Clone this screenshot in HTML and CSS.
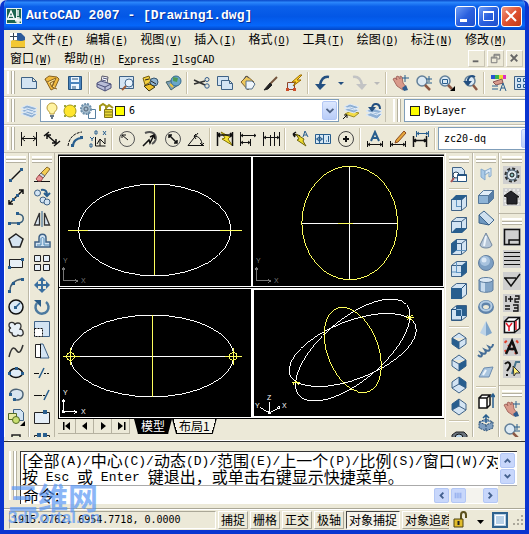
FILE: index.html
```html
<!DOCTYPE html>
<html lang="zh-CN">
<head>
<meta charset="utf-8">
<title>AutoCAD 2007 - [Drawing1.dwg]</title>
<link rel="stylesheet" href="styles.css">
</head>
<body>
<div class="window">
  <header class="titlebar">
    <svg class="app-icon" viewBox="0 0 16 16"><path fill="#e8f4ee" stroke="none" d="M0 0h16v16H0z"/><path fill="#1d6650" stroke="none" d="M1 1h9v9H1zM11 1h4v14H1v-3h10z"/><path stroke="#fff" stroke-width="1.4" d="M2 10l3-7 3 7M3 8h4M12 2v6M9 12h6M12 9v6"/><path stroke="#fff" d="M10 10h4v4h-4z"/></svg>
    <h1>AutoCAD 2007 - [Drawing1.dwg]</h1>
    <div class="win-controls">
      <button class="win-btn" aria-label="最小化"><svg viewBox="0 0 18 18"><path fill="#fff" stroke="none" d="M4 12h7v3H4z"/></svg></button>
      <button class="win-btn" aria-label="最大化"><svg viewBox="0 0 18 18"><path stroke="#fff" d="M4.500 4.500h10v9h-10z"/><path stroke="#fff" stroke-width="2" d="M4 5h11"/></svg></button>
      <button class="win-btn close" aria-label="关闭"><svg viewBox="0 0 18 18"><path stroke="#fff" stroke-width="2" d="M4 4l10 10M14 4L4 14"/></svg></button>
    </div>
  </header>

  <nav class="menubar">
    <svg class="doc-icon" viewBox="0 0 16 16"><path fill="#2b5a9b" stroke="none" d="M5 1h6l4 4v6H2z"/><path fill="#f3c832" stroke="none" d="M1 9c4-3 8 2 14-1v7H1z"/><path fill="#fff" stroke="none" d="M0 1h7v7H0z"/><path stroke="#345" d="M3.500 1v7M0 4.500h7"/><path stroke="#8b7a3a" d="M1 15.500h14"/></svg>
    <button class="menu">文件<span>(<u>F</u>)</span></button>
    <button class="menu">编辑<span>(<u>E</u>)</span></button>
    <button class="menu">视图<span>(<u>V</u>)</span></button>
    <button class="menu">插入<span>(<u>I</u>)</span></button>
    <button class="menu">格式<span>(<u>O</u>)</span></button>
    <button class="menu">工具<span>(<u>T</u>)</span></button>
    <button class="menu">绘图<span>(<u>D</u>)</span></button>
    <button class="menu">标注<span>(<u>N</u>)</span></button>
    <button class="menu">修改<span>(<u>M</u>)</span></button>
    <button class="menu">窗口<span>(<u>W</u>)</span></button>
    <button class="menu">帮助<span>(<u>H</u>)</span></button>
    <button class="menu"><span>E<u>x</u>press</span></button>
    <button class="menu"><span><u>J</u>lsgCAD</span></button>
    <div class="mdi-controls">
      <button aria-label="最小化文档"><svg viewBox="0 0 16 16"><path stroke="#666" stroke-width="2" d="M4 11h6"/></svg></button>
      <button aria-label="还原文档"><svg viewBox="0 0 16 16"><path stroke="#777" d="M6.500 7V3.500h6v5H10M3.500 6.500h6v6h-6zM6 4.500h6M4 7.500h5"/></svg></button>
      <button aria-label="关闭文档"><svg viewBox="0 0 16 16"><path stroke="#666" stroke-width="2" d="M4 4l7 7M11 4l-7 7"/></svg></button>
    </div>
  </nav>

  <div class="toolbar">
    <i class="grip"></i>
    <button class="tool" aria-label="新建"><svg viewBox="0 0 18 18"><path class="f" d="M1.500 3.500h11l4 4v7h-15zM12.500 3.500v4h4"/></svg></button>
    <button class="tool" aria-label="打开"><svg viewBox="0 0 18 18"><path fill="#f0b93d" stroke="#876222" d="M2 5l4-3 8 1 2 2-4 9-4 2z"/><path fill="#ffe69a" stroke="#876222" d="M2 5l2 3 9-4-4 9 5 2M7 9l4-2-2 6z"/></svg></button>
    <button class="tool" aria-label="保存"><svg viewBox="0 0 18 18"><path fill="#4b84bd" stroke="#24527f" d="M2.500 2.500h13v13h-13z"/><path fill="#eef6ff" stroke="none" d="M5 3h8v5H5zM5 10h8v5H5z"/><path stroke="#24527f" d="M6 5h6M7 12v3M9 12v3"/></svg></button>
    <i class="sep"></i>
    <button class="tool" aria-label="打印"><svg viewBox="0 0 18 18"><path fill="#fff" stroke="#556" d="M6 8l1-6 6 1-1 6"/><path fill="#b9bdd8" stroke="#4a4f78" d="M2 9l4-2 10 3v4l-6 3-8-4z"/><path stroke="#4a4f78" d="M2 10l8 3 6-3M10 13v4M8 4l4 1M7 6l4 1"/></svg></button>
    <button class="tool" aria-label="打印预览"><svg viewBox="0 0 18 18"><path class="f" d="M1.500 2.500h14v12h-14z"/><circle cx="11" cy="9" r="4" fill="#e9f3fb" stroke="#446a90"/><path stroke="#9a5b37" stroke-width="2" d="M8 12l-4 4"/></svg></button>
    <button class="tool" aria-label="发布"><svg viewBox="0 0 18 18"><path fill="#f5d13d" stroke="#755d0c" d="M2 4l6-2 2 6-6 3z"/><circle cx="13" cy="8" r="4" fill="#8fb3cf" stroke="#35556f"/><path fill="#efc32b" stroke="#3b3410" d="M3 12l6-2 5 3-6 4z"/><path stroke="#222" d="M4 6l4-1M10 7l5 3"/></svg></button>
    <button class="tool" aria-label="三维 DWF"><svg viewBox="0 0 18 18"><path fill="#7d9fb9" stroke="#466" d="M2 8l8-2 4 5-7 5z"/><circle cx="12" cy="7" r="5" fill="#69a7c9" stroke="#376b90"/><path fill="#4f9a55" stroke="none" d="M9 3l5 1-1 4-4-1z"/><path stroke="#e9c53c" stroke-width="2" d="M6 10l3 3"/></svg></button>
    <i class="sep"></i>
    <button class="tool" aria-label="剪切"><svg viewBox="0 0 18 18"><path stroke="#333" stroke-width="1.500" d="M1 6l11 5M1 10l11-3"/><circle cx="14" cy="5.500" r="2" stroke="#335c8c"/><circle cx="14" cy="12" r="2.200" stroke="#335c8c"/></svg></button>
    <button class="tool" aria-label="复制"><svg viewBox="0 0 18 18"><path class="f" d="M1.500 2.500h11v9h-11z"/><path class="f" d="M5.500 6.500h8l3 3v6h-11zM13.500 6.500v3h3"/></svg></button>
    <button class="tool" aria-label="粘贴"><svg viewBox="0 0 18 18"><path fill="#edc75c" stroke="#806332" d="M2 8l6-6 7 6-6 8z"/><path fill="#eef5fb" stroke="#55708b" d="M7 7h6l3 3-3 5H7z"/><path stroke="#555" d="M5 5l2-3 3 2"/></svg></button>
    <button class="tool" aria-label="特性匹配"><svg viewBox="0 0 18 18"><path stroke="#74543d" stroke-width="2" d="M15 3l-7 7"/><path fill="#222" stroke="#222" d="M8 9l2 2-4 4-4 1z"/></svg></button>
    <button class="tool" aria-label="块编辑器"><svg viewBox="0 0 18 18"><path fill="#dde8f3" stroke="#8e4529" d="M2.500 8.500h7v7h-7z"/><path fill="#ffd52a" stroke="#9b6b00" d="M15 1L7 8h4l-3 4 8-6h-4l5-5z"/><path fill="#cb4d2a" stroke="none" d="M1 14h3v3H1zM8 14h3v3H8z"/></svg></button>
    <i class="sep"></i>
    <button class="tool" aria-label="放弃"><svg viewBox="0 0 18 18"><path stroke="#234f80" stroke-width="2.500" d="M15 3C9 2 7 6 6 11"/><path fill="#234f80" stroke="none" d="M1 10h11l-6 6z"/></svg></button>
    <button class="tool drop" aria-label="放弃列表"><svg viewBox="0 0 8 8"><path fill="#234f80" stroke="none" d="M1 3h6L4 6z"/></svg></button>
    <button class="tool" aria-label="重做" disabled><svg viewBox="0 0 18 18"><path stroke="#c2c3c4" stroke-width="2.500" d="M3 3c6-1 8 3 9 8"/><path fill="#c2c3c4" stroke="none" d="M6 10h11l-5 6z"/></svg></button>
    <button class="tool drop" aria-label="重做列表" disabled><svg viewBox="0 0 8 8"><path fill="#b9b9b9" stroke="none" d="M1 3h6L4 6z"/></svg></button>
    <i class="sep"></i>
    <button class="tool" aria-label="实时平移"><svg viewBox="0 0 18 18"><path fill="#d99a8b" stroke="#a66a61" d="M1 5l2-1 2 2-1-3 2-1 2 3v-3l2 1 1 6 3 4-3 3-6-4z"/><path fill="#2f5c8e" stroke="none" d="M10 14l4-3 2 5-4 1z"/><path class="b" d="M13 1v7M10 4h7"/></svg></button>
    <button class="tool" aria-label="实时缩放"><svg viewBox="0 0 18 18"><circle class="lens" cx="7" cy="7" r="5"/><path class="handle" d="M10 11l5 5"/><path class="b" d="M14 2v6M11 5h6M12 9h5"/></svg></button>
    <button class="tool" aria-label="窗口缩放"><svg viewBox="0 0 18 18"><circle class="lens" cx="7" cy="7" r="5"/><path class="b" d="M4.500 5.500h5v4h-5z"/><path class="handle" d="M10 11l4 4"/><path fill="#000" stroke="none" d="M17 12v5h-5z"/></svg></button>
    <button class="tool" aria-label="缩放上一个"><svg viewBox="0 0 18 18"><circle class="lens" cx="9" cy="7" r="5"/><path class="handle" d="M12 11l4 5"/><path stroke="#234f80" stroke-width="2" d="M14 3c-5-3-8 2-7 6"/><path fill="#234f80" stroke="none" d="M2 7h9l-4 5z"/></svg></button>
    <i class="sep"></i>
    <button class="tool" aria-label="特性"><svg viewBox="0 0 18 18"><path fill="#2854d1" stroke="none" d="M1 1h4v4H1z"/><path fill="#38b54b" stroke="none" d="M5 1h4v4H5z"/><path fill="#f1da2e" stroke="none" d="M9 1h4v4H9z"/><path fill="#db2fc2" stroke="none" d="M13 1h3v4h-3z"/><path fill="#d99a8b" stroke="#855" d="M3 8l9-3 1 4-7 2z"/><path class="b" d="M2 12h6M2 15h6M10 17l3-8 3 8M11 14h4"/></svg></button>
    <button class="tool" aria-label="设计中心"><svg viewBox="0 0 18 18"><path class="f" d="M1.500 2.500h15v13h-15z"/><path class="b" d="M4.500 4.500h3v3h-3zM10.500 4.500h3v3h-3zM4.500 10.500h3v3h-3zM10.500 10.500h3v3h-3z"/></svg></button>
  </div>

  <div class="toolbar">
    <i class="grip"></i>
    <button class="tool" aria-label="图层特性管理器"><svg viewBox="0 0 18 18"><path class="layer" d="M1 12l6-3 10 3-5 4zM1 9l6-3 10 3-5 4zM1 6l6-3 10 3-5 4z"/></svg></button>
    <div class="combo grow">
      <svg viewBox="0 0 18 18"><path fill="#fff3a1" stroke="#b79a3b" d="M7 12C7 9 4 9 4 6a5 5 0 0110 0c0 3-3 3-3 6z"/><path stroke="#678" stroke-width="2" d="M7 14h4M8 16h2"/></svg>
      <svg viewBox="0 0 18 18"><path fill="#9aa53c" stroke="none" d="M3 3h2v2H3zM13 3h2v2h-2zM3 13h2v2H3zM13 13h2v2h-2z"/><circle cx="9" cy="9" r="6" fill="#ffe62e" stroke="#a39a1c"/></svg>
      <svg viewBox="0 0 18 18"><path fill="#fff" stroke="#58809f" d="M9.500 7.500h7v9h-7z"/><circle cx="7" cy="7" r="5" fill="#a2bacc" stroke="#6f91ab" stroke-width="2" stroke-dasharray="2 1"/><circle cx="7" cy="7" r="2" stroke="#567"/></svg>
      <svg viewBox="0 0 18 18"><path stroke="#a39619" stroke-width="2" d="M3 9V4l3-2 3 2v5M9 6l3-3 4 3"/><path fill="#e8d837" stroke="#827615" d="M7.500 7.500h8v8h-8z"/><path stroke="#827615" d="M8 10h7M8 13h7"/></svg>
      <i class="swatch"></i>
      <select aria-label="图层"><option>6</option></select>
      <svg class="chevron" viewBox="0 0 15 18"><path d="M4 7l4 4 4-4"/></svg>
    </div>
    <button class="tool" aria-label="将对象的图层置为当前"><svg viewBox="0 0 18 18"><path fill="#f3dc46" stroke="#9b8d29" d="M3 12l6-3 8 2-5 4z"/><path class="layer" d="M2 8l6-3 9 3-5 3zM2 5l6-3 9 3-5 3z"/><path stroke="#111" d="M1 17l4-4M2 13h3v3"/></svg></button>
    <button class="tool" aria-label="上一个图层"><svg viewBox="0 0 18 18"><path class="layer" d="M1 13l6-3 10 2-5 5zM1 9l6-3 10 3-5 4z"/><path stroke="#234f80" stroke-width="2" d="M15 7c0-6-7-7-8-1"/><path fill="#234f80" stroke="none" d="M3 5h8l-4 5z"/></svg></button>
    <div class="subbar">
      <i class="grip"></i>
      <div class="combo wide">
        <i class="swatch"></i>
        <select aria-label="颜色"><option>ByLayer</option></select>
      </div>
    </div>
  </div>

  <div class="toolbar">
    <i class="grip"></i>
    <button class="tool" aria-label="线性标注"><svg viewBox="0 0 18 18"><path d="M1.500 2v14M16.500 2v14M2 8.500h14M5 6L2 8.500 5 11M13 6l3 2.500-3 2.500"/></svg></button>
    <button class="tool" aria-label="对齐标注"><svg viewBox="0 0 18 18"><path stroke-width="1.500" d="M1 6l5-4M11 16l6-5M4 5l9 8M4 9V5h4M13 9v4H9"/></svg></button>
    <button class="tool" aria-label="弧长标注"><svg viewBox="0 0 18 18"><path d="M2 16C3 8 8 3 16 2" stroke-dasharray="3 1"/><path class="b" stroke-width="2" d="M7 16c0-5 4-8 9-8"/><path class="n" d="M5 14h3v3H5zM14 6h3v3h-3z"/></svg></button>
    <button class="tool" aria-label="坐标标注"><svg viewBox="0 0 18 18"><path d="M6.500 7v9h10M8 14l3-5 5 5V8M11 9v7"/><path class="b" d="M6 1h2v3H6zM14 1l3 4M17 1l-3 4M1 7l2 2 2-2M3 9v2M1 14h2v3H1z"/></svg></button>
    <i class="sep"></i>
    <button class="tool" aria-label="半径标注"><svg viewBox="0 0 18 18"><circle cx="9" cy="9" r="7.500" stroke="#555"/><path d="M10 10L4 5M4 8V5h4"/></svg></button>
    <button class="tool" aria-label="折弯标注"><svg viewBox="0 0 18 18"><path stroke="#555" stroke-width="2" d="M4 3c10-4 15 6 7 11"/><path stroke-width="1.500" d="M2 16l6-6 1 3 4-8M9 7l4-2 1 4"/></svg></button>
    <button class="tool" aria-label="直径标注"><svg viewBox="0 0 18 18"><circle cx="9" cy="9" r="7.500" stroke="#555"/><path stroke-width="1.500" d="M5 5l8 8M5 8V5h3M13 10v3h-3"/></svg></button>
    <button class="tool" aria-label="角度标注"><svg viewBox="0 0 18 18"><path d="M17 15.500H1L11 3M7 6c5 0 8 4 8 9M13 13l2 2 2-2M9 4L7 6l2 3"/></svg></button>
    <i class="sep"></i>
    <button class="tool" aria-label="快速标注"><svg viewBox="0 0 18 18"><path fill="#f5e332" stroke="#857400" d="M5 2l9 5-2 2 4 6-10-6 3-1z"/><path stroke-width="1.500" d="M1.500 2v14M16.500 2v14M2 5h14M4 3L2 5l2 2M14 3l2 2-2 2"/></svg></button>
    <button class="tool" aria-label="基线标注"><svg viewBox="0 0 18 18"><path d="M1.500 2v14M2 5.500h15M2 12.500h9M11.500 9v7M4 4L2 5.500 4 7M4 11l-2 1.500L4 14M15 4l2 1.500L15 7M9 11l2 1.500L9 14"/></svg></button>
    <button class="tool" aria-label="连续标注"><svg viewBox="0 0 18 18"><path d="M1.500 2v14M8.500 5v11M12.500 2v14M17.500 2v14M2 7.500h15M4 6L2 7.500 4 9M15 6l2 1.500L15 9"/></svg></button>
    <i class="sep"></i>
    <button class="tool" aria-label="快速引线"><svg viewBox="0 0 18 18"><path stroke-width="1.500" d="M2 4l7 2M2 4l3-2M2 4l2 3"/><path fill="#f1dc2b" stroke="#6e6510" d="M5 4l8 5-1 2 3 5-9-6 2-1z"/><path class="b" d="M12 7l2-6 3 6M13 5h3"/></svg></button>
    <button class="tool" aria-label="公差"><svg viewBox="0 0 18 18"><path fill="#d7e8f5" stroke="#285e8e" d="M1.500 4.500h15v9h-15zM9.500 4v10"/><circle cx="5.500" cy="9" r="2" stroke="#285e8e"/><path class="b" d="M5.500 5v8M2 9h7M14.500 6v6M12 11h1"/></svg></button>
    <button class="tool" aria-label="圆心标记"><svg viewBox="0 0 18 18"><circle cx="9" cy="9" r="7.500" stroke="#444"/><path stroke-width="2" d="M9 6v6M6 9h6"/></svg></button>
    <i class="sep"></i>
    <button class="tool" aria-label="编辑标注"><svg viewBox="0 0 18 18"><path d="M1.500 11v6M16.500 11v6M2 14.500h14M4 13l-2 1.500L4 16M14 13l2 1.500-2 1.500"/><path class="b" stroke-width="2" d="M5 11l4-9 4 9M6 8h6"/></svg></button>
    <button class="tool" aria-label="编辑标注文字"><svg viewBox="0 0 18 18"><path d="M1.500 11v6M16.500 11v6M2 14.500h14M4 13l-2 1.500L4 16M14 13l2 1.500-2 1.500"/><path fill="#e5a63a" stroke="#8b4b20" d="M15 1l2 2-8 9-3 1 1-3z"/></svg></button>
    <button class="tool" aria-label="标注更新"><svg viewBox="0 0 18 18"><path class="b" d="M4.500 1v6M16.500 1v6M5 3.500h11M7 2L5 3.500 7 5M14 2l2 1.500L14 5"/><path stroke-width="1.500" d="M1.500 6v11M14.500 6v11M2 10.500h12M4 9l-2 1.500L4 12M12 9l2 1.500-2 1.500"/></svg></button>
    <i class="sep"></i>
    <div class="combo style-combo">
      <select aria-label="标注样式"><option>zc20-dq</option></select>
      <svg class="chevron" viewBox="0 0 15 18"><path d="M4 7l4 4 4-4"/></svg>
    </div>
  </div>

  <main class="workspace">
    <div class="rail draw-rail">
      <i class="hgrip"></i>
      <button class="tool" aria-label="直线"><svg viewBox="0 0 18 18"><path stroke-width="1.500" d="M3 15L15 3"/><path class="n" d="M2 13h3v3H2zM13 2h3v3h-3z"/></svg></button>
      <button class="tool" aria-label="构造线"><svg viewBox="0 0 18 18"><path stroke-width="1.500" d="M2 16L16 2M2 12v4h4M16 6V2h-4"/><path class="n" d="M5 10h3v3H5zM9 6h3v3H9z"/></svg></button>
      <button class="tool" aria-label="多段线"><svg viewBox="0 0 18 18"><path stroke="#365b78" stroke-width="1.500" d="M2 13h9c7 0 7-9 0-9"/><path class="n" d="M1 12h3v3H1zM10 12h3v3h-3zM9 2h3v3H9z"/></svg></button>
      <button class="tool" aria-label="正多边形"><svg viewBox="0 0 18 18"><path fill="#d6e4f0" stroke="#222" stroke-width="1.500" d="M9 2l7 5-3 8H5L2 7z"/></svg></button>
      <button class="tool" aria-label="矩形"><svg viewBox="0 0 18 18"><path fill="#e8f0f7" stroke="#222" d="M2.500 5.500h13v8h-13z"/><path class="n" d="M1 12h3v3H1zM14 4h3v3h-3z"/></svg></button>
      <button class="tool" aria-label="圆弧"><svg viewBox="0 0 18 18"><path stroke="#465d70" stroke-width="1.500" d="M3 15C3 8 8 4 15 3"/><path class="n" d="M1 14h3v3H1zM5 6h3v3H5zM14 2h3v3h-3z"/></svg></button>
      <button class="tool" aria-label="圆"><svg viewBox="0 0 18 18"><circle cx="9" cy="9" r="7" fill="#dbe9f5" stroke-width="1.500"/><path class="b" stroke-width="1.500" d="M9 9l4-4"/><path class="n" d="M7 8h3v3H7z"/></svg></button>
      <button class="tool" aria-label="修订云线"><svg viewBox="0 0 18 18"><path fill="#e8f0f7" stroke="#333" stroke-width="1.300" d="M8 5c-1-4-6-3-6 0 0 2 1 3 2 3-3 1-2 5 1 5 0 4 5 4 6 2 3 2 6 0 5-3 0-2-2-3-3-3 2-3 1-6-2-6-1 0-3 0-3 2z"/></svg></button>
      <button class="tool" aria-label="样条曲线"><svg viewBox="0 0 18 18"><path stroke="#333" stroke-width="1.500" d="M2 15C5 2 8 6 10 9s4 1 6-6"/></svg></button>
      <button class="tool" aria-label="椭圆"><svg viewBox="0 0 18 18"><ellipse cx="9" cy="9" rx="6.500" ry="4.500" fill="#e1edf7" stroke-width="1.500"/><path class="n" d="M1 8h3v3H1zM14 8h3v3h-3zM8 3h3v3H8z"/></svg></button>
      <button class="tool" aria-label="椭圆弧"><svg viewBox="0 0 18 18"><path fill="#d8e5ef" stroke="#4d6478" stroke-width="1.500" d="M3 7c3-6 13-4 13 1 0 6-6 7-10 5"/><path class="n" d="M2 7h3v3H2zM6 12h3v3H6z"/></svg></button>
      <button class="tool" aria-label="插入块"><svg viewBox="0 0 18 18"><path class="f" d="M6.500 1.500h7l3 3v8h-10z"/><path fill="#e7eaa3" stroke="#536b25" d="M1.500 5.500h8v6h-8z"/><circle cx="9" cy="12" r="3.500" fill="#cadf70" stroke="#536b25"/><path fill="#000" stroke="none" d="M18 13v5h-5z"/></svg></button>
      <button class="tool" aria-label="创建块"><svg viewBox="0 0 18 18"><path fill="#edf1d6" stroke="#222" stroke-width="1.500" d="M5 5h8v8H5z"/></svg></button>
    </div>
    <div class="rail">
      <i class="hgrip"></i>
      <button class="tool" aria-label="删除"><svg viewBox="0 0 18 18"><path d="M1 15.500h16"/><path fill="#f3cd54" stroke="#8a6a2b" d="M14 1l3 2-7 9-4-3z"/><path fill="#ced6dd" stroke="#666" d="M8 7l4 3-2 2-4-3z"/><path fill="#e99495" stroke="#a34e4e" d="M6 9l4 3-2 3H5l-2-2z"/></svg></button>
      <button class="tool" aria-label="复制对象"><svg viewBox="0 0 18 18"><circle class="f" cx="4.500" cy="5" r="3"/><circle class="f" cx="10" cy="12" r="3"/><circle class="f" cx="14" cy="14" r="3"/><path class="b" stroke-width="2" d="M8 2c5-1 6 2 6 5M11 5l3 3 3-3"/></svg></button>
      <button class="tool" aria-label="镜像"><svg viewBox="0 0 18 18"><path fill="#dce8f2" stroke="#333" stroke-width="1.300" d="M6.500 3v12h-5zM11.500 3v12h5z"/><path class="b" d="M9 1v16"/></svg></button>
      <button class="tool" aria-label="偏移"><svg viewBox="0 0 18 18"><path class="f" stroke-width="1.500" d="M2 15v-5h4V6c0-5 7-5 7 0v4h4v5z"/><path stroke="#4a86b4" d="M4 13h4V7c0-2 3-2 3 0v6h5"/></svg></button>
      <button class="tool" aria-label="阵列"><svg viewBox="0 0 18 18"><path fill="#e5eff8" stroke="#222" d="M1.500 1.500h6v6h-6zM10.500 1.500h6v6h-6zM1.500 10.500h6v6h-6zM10.500 10.500h6v6h-6z"/></svg></button>
      <button class="tool" aria-label="移动"><svg viewBox="0 0 18 18"><path fill="#3a6f9f" stroke="none" d="M9 1l4 4h-3v3h3V5l4 4-4 4v-3h-3v3h3l-4 4-4-4h3v-3H5v3L1 9l4-4v3h3V5H5z"/></svg></button>
      <button class="tool" aria-label="旋转"><svg viewBox="0 0 18 18"><path stroke="#4c7a9f" stroke-width="2.500" d="M4 5a6.500 6.500 0 109-1"/><path fill="#285b87" stroke="none" d="M1 2h7v7z"/></svg></button>
      <button class="tool" aria-label="缩放"><svg viewBox="0 0 18 18"><path class="f" d="M1.500 1.500h15v15h-15z"/><path fill="#fff" stroke-dasharray="2 1" d="M1.500 8.500h8v8h-8z"/></svg></button>
      <button class="tool" aria-label="拉伸"><svg viewBox="0 0 18 18"><path class="f" d="M7 2h3l6 14H7z"/><path fill="#fff" stroke="#222" d="M2.500 2.500h5v13h-5z"/><path stroke-dasharray="2 1" d="M7.500 2v14"/></svg></button>
      <button class="tool" aria-label="修剪"><svg viewBox="0 0 18 18"><path d="M1 9.500h5"/><path stroke-dasharray="2 1" d="M11 9.500h6"/><path class="b" stroke-width="1.500" d="M6 14L11 4"/></svg></button>
      <button class="tool" aria-label="延伸"><svg viewBox="0 0 18 18"><path d="M1 9.500h6"/><path stroke-dasharray="2 1" d="M7 9.500h5"/><path class="b" stroke-width="1.500" d="M11 14l5-10"/></svg></button>
      <button class="tool" aria-label="打断于点"><svg viewBox="0 0 18 18"><path fill="#e4eef7" stroke="#222" d="M1.500 4.500h15v11h-15z"/><path class="n" d="M10 2h4v4h-4z"/></svg></button>
      <button class="tool" aria-label="打断"><svg viewBox="0 0 18 18"><path stroke="#222" d="M6 5.500H1.500v10h15v-10H12"/><path class="n" d="M4 3h4v4H4zM10 3h4v4h-4z"/></svg></button>
    </div>

    <section class="drawing">
      <div class="viewports">
        <div class="viewport"><svg viewBox="0 0 191 129"><ellipse cx="95" cy="73" rx="76.500" ry="46"/><path d="M8 73.500h174"/><path class="y" d="M8 73.500h20M160 73.500h22M94.500 27v91"/><path class="ucs" d="M3.500 110v14H18M2 113l1.500-3 1.500 3M15 122.500l3 1.500-3 1.500"/><text class="dim" x="3" y="106">Y</text><text class="dim" x="21" y="126">X</text></svg></div>
        <div class="viewport"><svg viewBox="0 0 191 129"><path d="M49 66.500h96M96.500 9v114"/><path class="y" d="M85 66.500h15"/><ellipse class="y" cx="97" cy="66" rx="48" ry="57"/><path class="ucs" d="M3.500 110v14H18M2 113l1.500-3 1.500 3M15 122.500l3 1.500-3 1.500"/><text class="dim" x="3" y="106">Y</text><text class="dim" x="21" y="126">X</text></svg></div>
        <div class="viewport"><svg viewBox="0 0 191 128"><ellipse cx="92" cy="67" rx="82" ry="41"/><path d="M3 67.500h179"/><path class="y" d="M92.500 26v82M3 67.500h17M165 67.500h17M10.500 59v17M173.500 59v17"/><circle class="y" cx="10.500" cy="67.500" r="4"/><circle class="y" cx="173.500" cy="67.500" r="4"/><path d="M3.500 110v13H17M2 113l1.500-3 1.500 3M14 121.500l3 1.500-3 1.500M2.500 122h2v2h-2z"/><text x="3" y="106">Y</text><text x="21" y="125">X</text></svg></div>
        <div class="viewport active"><svg viewBox="0 0 189 126"><ellipse cx="99" cy="60" rx="70.500" ry="31" transform="rotate(-40.200 99 60)"/><ellipse cx="99" cy="60" rx="67.600" ry="29" transform="rotate(-21.600 99 60)"/><ellipse class="y" cx="99" cy="60" rx="44.700" ry="25.600" transform="rotate(69.400 99 60)"/><path class="y" d="M152 27.500h8M153 25l6 5M159 25l-6 5M38 92.500h8M39 95l3-4 3 4"/><path d="M15.500 112v11l-9-5M15.500 123l10-5M24 117h2v2h-2zM14.500 122h2v2h-2z"/><text x="13" y="110">Z</text><text x="1" y="118">Y</text><text x="28" y="118">X</text></svg></div>
      </div>
      <div class="tabs">
        <button class="nav" aria-label="第一个"><svg viewBox="0 0 10 10"><path fill="#000" stroke="none" d="M1 1h1.500v8H1zM8 1v8L3 5z"/></svg></button>
        <button class="nav" aria-label="上一个"><svg viewBox="0 0 10 10"><path fill="#000" stroke="none" d="M7 1v8L2 5z"/></svg></button>
        <button class="nav" aria-label="下一个"><svg viewBox="0 0 10 10"><path fill="#000" stroke="none" d="M3 1v8l5-4z"/></svg></button>
        <button class="nav" aria-label="最后一个"><svg viewBox="0 0 10 10"><path fill="#000" stroke="none" d="M8 1h1.500v8H8zM2 1v8l5-4z"/></svg></button>
        <button class="tab current">模型</button>
        <button class="tab">布局1</button>
      </div>
    </section>

    <div class="rail view-rail">
      <i class="hgrip"></i>
      <button class="tool" aria-label="命名视图"><svg viewBox="0 0 18 18"><path class="f" d="M2.500 1.500h9l3 3v11h-12z"/><circle cx="6" cy="9" r="3" fill="#fff" stroke="#24415b"/><path fill="#fff" stroke="#24527f" d="M7.500 8.500h9v7h-9z"/><path stroke="#24527f" stroke-width="2" d="M8 9h8"/><path stroke="#a55" stroke-width="2" d="M4 12l-3 4"/></svg></button>
      <i class="hsep"></i>
      <button class="tool" aria-label="俯视"><svg viewBox="0 0 18 18"><path class="f" d="M1.500 5.500h10v11h-10zM11.500 5.500l5-4v11l-5 4z"/><path class="n" d="M1 6l5-5h11l-5 5z"/><path stroke="#5f94c2" d="M6.500 6v6M6 12.500h5"/></svg></button>
      <button class="tool" aria-label="仰视"><svg viewBox="0 0 18 18"><path class="f" d="M1.500 5.500l5-4h10v11l-5 4h-10zM1.500 5.500h10v11M11.500 5.500l5-4"/><path class="n" d="M1 17l5-5h11l-5 5z"/></svg></button>
      <button class="tool" aria-label="左视"><svg viewBox="0 0 18 18"><path class="f" d="M1.500 5.500l5-4h10v11l-5 4h-10zM1.500 5.500h10v11M11.500 5.500l5-4"/><path class="n" d="M1 6l6-5v11l-6 5z"/><path stroke="#5f94c2" d="M6 12.500h10"/></svg></button>
      <button class="tool" aria-label="右视"><svg viewBox="0 0 18 18"><path class="f" d="M1.500 5.500l5-4h10v11l-5 4h-10zM1.500 5.500h10v11"/><path class="n" d="M11 6l6-5v11l-6 5z"/><path stroke="#5f94c2" d="M6.500 2v10H2M6 12.500h5"/></svg></button>
      <button class="tool" aria-label="主视"><svg viewBox="0 0 18 18"><path class="f" d="M1.500 5.500l5-4h10v11l-5 4h-10z"/><path class="n" d="M1 6h11v11H1z"/><path stroke="#24527f" d="M12 6l4-4"/></svg></button>
      <button class="tool" aria-label="后视"><svg viewBox="0 0 18 18"><path class="f" d="M1.500 5.500l5-4h10v11l-5 4h-10z"/><path class="n" d="M6 2h10v10H6z"/><path stroke="#9cc0e0" d="M6 5.500h5.500V12"/><path stroke="#24527f" d="M1.500 5.500h5M11.500 12v4M1.500 5v11h10"/></svg></button>
      <i class="hsep"></i>
      <button class="tool" aria-label="西南等轴测"><svg viewBox="0 0 18 18"><path class="f" d="M9 1l7 5v6l-7 5-7-5V6zM2 6l7 4 7-4M9 10v7"/><path class="n" d="M2 6l7 4v7l-7-5z"/></svg></button>
      <button class="tool" aria-label="东南等轴测"><svg viewBox="0 0 18 18"><path class="f" d="M9 1l7 5v6l-7 5-7-5V6zM2 6l7 4 7-4M9 10v7"/><path class="n" d="M16 6l-7 4v7l7-5z"/></svg></button>
      <button class="tool" aria-label="东北等轴测"><svg viewBox="0 0 18 18"><path class="f" d="M9 1l7 5v6l-7 5-7-5V6zM2 12l7-4 7 4M9 8V1"/><path class="n" d="M9 1l7 5v6L9 8z"/></svg></button>
      <button class="tool" aria-label="西北等轴测"><svg viewBox="0 0 18 18"><path class="f" d="M9 1l7 5v6l-7 5-7-5V6zM2 12l7-4 7 4M9 8V1"/><path class="n" d="M9 1L2 6v6l7-4z"/></svg></button>
      <i class="hsep"></i>
      <button class="tool" aria-label="创建相机"><svg viewBox="0 0 18 18"><path fill="#69737d" stroke="#222" d="M2 9l4-3h8l3 3v7H2z"/><circle cx="9" cy="12" r="4" fill="#b9d6ea"/></svg></button>
    </div>

    <div class="rail">
      <i class="hgrip"></i>
      <button class="tool" aria-label="多段体"><svg viewBox="0 0 18 18"><path fill="#a8c9e7" stroke="#84a9cc" d="M4 3l4 2v9l-4-3z"/><path fill="#dbeaf8" stroke="#84a9cc" d="M8 5l6-3v8l-2 1V6l-4 3z"/></svg></button>
      <button class="tool" aria-label="长方体"><svg viewBox="0 0 18 18"><path fill="#8db3d6" stroke="#56799c" d="M1.500 7.500h10v8h-10z"/><path fill="#e0edf8" stroke="#56799c" d="M1.500 7.500l5-5h10l-5 5z"/><path fill="#587fa8" stroke="#56799c" d="M11.500 7.500l5-5v8l-5 5z"/></svg></button>
      <button class="tool" aria-label="楔体"><svg viewBox="0 0 18 18"><path fill="#6e97bf" stroke="#3d648c" d="M2 5v8l10 2z"/><path fill="#cfe0ef" stroke="#3d648c" d="M2 5l5-4 10 9-5 5z"/></svg></button>
      <button class="tool" aria-label="圆锥体"><svg viewBox="0 0 18 18"><path fill="#b6c6d8" stroke="#71869e" d="M9 1l6 12c-1 4-11 4-12 0z"/><path stroke="#edf4fb" stroke-width="2" d="M9 4L7 14"/></svg></button>
      <button class="tool" aria-label="球体"><svg viewBox="0 0 18 18"><circle cx="9" cy="9" r="7.500" fill="#7c9fc3" stroke="#627e9e"/><circle cx="8" cy="7" r="5" fill="#a8c3de" stroke="none"/><circle cx="7" cy="6" r="2.500" fill="#dce9f6" stroke="none"/></svg></button>
      <button class="tool" aria-label="圆柱体"><svg viewBox="0 0 18 18"><path fill="#83a5c7" stroke="#5d7d9f" d="M2 4v10c1 3 13 3 14 0V4z"/><path fill="#c9dcee" stroke="none" d="M4 5h4v11l-4-1z"/><ellipse cx="9" cy="4" rx="7" ry="2.500" fill="#dce9f5" stroke="#5d7d9f"/></svg></button>
      <button class="tool" aria-label="圆环体"><svg viewBox="0 0 18 18"><ellipse cx="9" cy="9" rx="5.500" ry="4.500" stroke="#5f83aa" stroke-width="5"/><ellipse cx="9" cy="8" rx="5.500" ry="4.500" stroke="#b4cde4" stroke-width="2"/></svg></button>
      <button class="tool" aria-label="棱锥面"><svg viewBox="0 0 18 18"><path fill="#7fa5ca" stroke="none" d="M9 1l6 12-6 3z"/><path fill="#bcd3e8" stroke="none" d="M9 1L3 13l6 3z"/></svg></button>
      <button class="tool" aria-label="螺旋"><svg viewBox="0 0 18 18"><path stroke="#456d96" stroke-width="2" d="M1 13c3 3 5 1 3-2 4 2 6 0 4-3 4 2 6 0 4-3 2 1 4 0 4-3"/></svg></button>
      <button class="tool" aria-label="平面曲面"><svg viewBox="0 0 18 18"><path fill="#a9c5df" stroke="#6c8bae" d="M2 13L7 4l9-1-4 10z"/><path stroke="#edf4fa" stroke-width="2" d="M6 11l3-5"/></svg></button>
      <i class="hsep"></i>
      <button class="tool" aria-label="拉伸实体"><svg viewBox="0 0 18 18"><path fill="#fff" stroke-width="1.500" d="M2 6h8v10H2zM2 6l3-3h8l-3 3M13 3v10l-3 3"/><path class="b" stroke-width="1.500" d="M16 2v14M14 5l2-3 2 3"/></svg></button>
      <button class="tool" aria-label="按住并拖动"><svg viewBox="0 0 18 18"><path fill="#7f9ebf" stroke="#294f76" stroke-dasharray="2 1" d="M2 8l7-3 7 3v6l-7 3-7-3zM2 8l7 3 7-3M9 11v6"/><path class="b" stroke-width="1.500" d="M9 9V1M6 4l3-3 3 3"/></svg></button>
    </div>

    <div class="rail last-rail">
      <i class="hgrip"></i>
      <button class="tool gray" aria-label="齿轮"><svg viewBox="0 0 18 18"><circle cx="9" cy="9" r="6.500" fill="#b6cddd" stroke="#333" stroke-width="2" stroke-dasharray="3 2"/><circle cx="9" cy="9" r="5" fill="#dde8ef" stroke="#345"/><circle cx="9" cy="9" r="2" fill="#8bb"/></svg></button>
      <button class="tool gray" aria-label="建筑"><svg viewBox="0 0 18 18"><path stroke="#fff" stroke-dasharray="2 2" d="M2 2h14v14H2z"/><path fill="#24242a" stroke="#111" d="M1 8l7-5 8 6h-2v7H4V9z"/></svg></button>
      <div class="rail-group">
        <i class="hgrip"></i>
        <button class="tool gray" aria-label="图框"><svg viewBox="0 0 18 18"><path stroke-width="1.500" d="M1.500 1.500h15v15h-15zM6 16v-4h10"/></svg></button>
        <button class="tool gray" aria-label="明细表"><svg viewBox="0 0 18 18"><path d="M1 2.500h16M1 6.500h16M1 10.500h16M1 14.500h16"/></svg></button>
        <button class="tool gray" aria-label="粗糙度"><svg viewBox="0 0 18 18"><path stroke-width="1.500" d="M1 6h12M2 6l6 8L17 2"/></svg></button>
        <button class="tool gray" aria-label="计算"><svg viewBox="0 0 18 18"><path stroke-width="1.300" d="M3 2v6M5 5h5M7.500 2v6M12 2h4v3h-4v3h4M2 12h5M2 15h5M10 11h5v6h-5M11 14h4"/></svg></button>
        <button class="tool gray" aria-label="标准件"><svg viewBox="0 0 18 18"><path fill="#fff" stroke="#111" stroke-width="1.500" d="M1.500 5.500h10v11h-10zM1.500 5.500l4-4h11v11l-5 4M11.500 5.500l5-4"/><path stroke="#e21b2b" stroke-width="1.500" d="M3 7l3 4 3-4M6 11v4M13 5v9"/></svg></button>
        <button class="tool gray" aria-label="文字"><svg viewBox="0 0 18 18"><path stroke="#e03c26" stroke-width="3" stroke-dasharray="2 3" d="M2 3l12 13M2 14L15 3"/><path stroke-width="2.500" d="M3 16l6-13 5 13M5 11h8"/></svg></button>
        <button class="tool gray" aria-label="查询"><svg viewBox="0 0 18 18"><path stroke-width="2" d="M2 4c3-4 7 0 4 4l-2 3M4 14v2"/><path stroke="#46738d" stroke-width="2" d="M9 14l4-12h4"/><path fill="#fff177" stroke="#333" d="M10 6l7 7h-4l-2 3z"/></svg></button>
      </div>
      <div class="rail-group">
        <i class="hgrip"></i>
        <button class="tool" aria-label="平移"><svg viewBox="0 0 18 18"><path fill="#d99a8b" stroke="#a66a61" d="M1 5l2-1 2 2-1-3 2-1 2 3v-3l2 1 1 6 3 4-3 3-6-4z"/><path fill="#2f5c8e" stroke="none" d="M10 14l4-3 2 5-4 1z"/><path class="b" d="M13 1v7M10 4h7"/></svg></button>
        <button class="tool" aria-label="缩放视图"><svg viewBox="0 0 18 18"><circle class="lens" cx="7" cy="7" r="5"/><path class="handle" d="M10 11l5 5"/><path class="b" d="M14 2v6M11 5h6M12 9h5"/></svg></button>
      </div>
    </div>
  </main>

  <section class="command">
    <i class="grip"></i>
    <div class="console">
      <div class="history">
        <div class="log">
          <p>[全部<span>(A)/</span>中心<span>(C)/</span>动态<span>(D)/</span>范围<span>(E)/</span>上一个<span>(P)/</span>比例<span>(S)/</span>窗口<span>(W)/</span>对象</p>
          <p>按<span> Esc </span>或<span> Enter </span>键退出，或单击右键显示快捷菜单。</p>
        </div>
        <div class="vscroll">
          <button aria-label="向上滚动"><svg viewBox="0 0 14 14"><path d="M4 9l3-3 3 3"/></svg></button>
          <button aria-label="向下滚动"><svg viewBox="0 0 14 14"><path d="M4 5l3 3 3-3"/></svg></button>
        </div>
      </div>
      <div class="prompt">
        <label for="cmd">命令:</label>
        <input id="cmd" type="text">
        <div class="hscroll">
          <button aria-label="向左滚动"><svg viewBox="0 0 14 14"><path d="M9 4L6 7l3 3"/></svg></button>
          <button class="thumb" aria-label="滑块"><svg viewBox="0 0 14 14"><path d="M3.500 4v6M5.500 4v6M7.500 4v6M9.500 4v6"/></svg></button>
          <button class="end" aria-label="向右滚动"><svg viewBox="0 0 14 14"><path d="M5 4l3 3-3 3"/></svg></button>
        </div>
      </div>
    </div>
  </section>

  <footer class="status">
    <output class="coords">1915.2762, 6954.7718, 0.0000</output>
    <button class="mode">捕捉</button>
    <button class="mode">栅格</button>
    <button class="mode">正交</button>
    <button class="mode">极轴</button>
    <button class="mode on">对象捕捉</button>
    <button class="mode cut">对象追踪</button>
    <div class="tray">
      <button aria-label="锁定"><svg viewBox="0 0 18 18"><path stroke="#5b501c" stroke-width="2" d="M10 9V4c0-4 5-4 5 0v3"/><path fill="#e1bd2c" stroke="#4f4310" d="M3 8h9v8H3z"/><path stroke="#222" stroke-width="2" d="M7.500 10v4"/></svg></button>
      <button aria-label="状态栏菜单"><svg viewBox="0 0 18 18"><path fill="#000" stroke="none" d="M6 9h7l-3.500 4z"/></svg></button>
      <button aria-label="全屏显示"><svg viewBox="0 0 18 18"><path fill="#b8d2e8" stroke="#2e638f" stroke-width="2" d="M2 2h14v14H2z"/><path stroke="#fff" d="M4.500 4.500h9v9h-9z"/></svg></button>
      <svg class="resize" viewBox="0 0 14 14"><path stroke="#aaa79a" stroke-width="2" stroke-dasharray="2 2" d="M11 2v12M7 6v8M3 10v4"/></svg>
    </div>
  </footer>
  <div class="watermark"><strong>三维网</strong><span>3dPortal.cn</span></div>
</div>
</body>
</html>
```
FILE: styles.css
```css
* { box-sizing: border-box; }

body {
  margin: 0;
  background: #d9e2f4;
  color: #000;
  font: 12px/16px "Noto Sans CJK SC", sans-serif;
}

button, select, input {
  margin: 0;
  padding: 0;
  border: 0;
  border-radius: 0;
  background: none;
  color: inherit;
  font: inherit;
  appearance: none;
}

svg {
  display: block;
  flex: none;
  width: 18px;
  height: 18px;
  fill: none;
  stroke: #111;
}

.window {
  position: relative;
  display: flex;
  flex-direction: column;
  height: 100vh;
  overflow: hidden;
  border: solid #0a35d0;
  border-width: 0 4px 4px;
  border-radius: 7px 7px 0 0;
  background: #ece9d8;
}

.b { stroke: #285e8e; }
.n { fill: #285e8e; stroke: none; }
.f { fill: #d3e4f3; stroke: #3f6286; }
.layer { fill: #8fb0d4; stroke: #dfebf8; }
.lens { fill: #dceaf4; stroke: #63809a; stroke-width: 1.5; }
.handle { stroke: #8b5844; stroke-width: 2.5; }

/* Title bar */
.titlebar {
  display: flex;
  flex: none;
  align-items: center;
  height: 30px;
  margin: 0 -4px;
  padding: 2px 7px 0 6px;
  background: linear-gradient(#0a48c8, #2a86fb 8%, #0b60ea 22%, #0357e6 55%, #0566fa 85%, #0345c4);
}
.app-icon { width: 16px; height: 16px; }
.titlebar h1 {
  flex: 1;
  margin: 0 0 0 4px;
  overflow: hidden;
  color: #fff;
  font: bold 13px/18px "Liberation Mono", monospace;
  text-shadow: 1px 1px #06309b;
  white-space: nowrap;
}
.win-controls { display: flex; gap: 2px; }
.win-btn {
  width: 21px;
  height: 21px;
  border: 1px solid #fff;
  border-radius: 3px;
  background: linear-gradient(135deg, #6f9df5, #2a60df 50%, #1e50cc);
}
.close { background: linear-gradient(135deg, #f09a80, #df5030 50%, #c23b16); }

/* Menus wrap onto a second line when the window is narrow */
.menubar {
  display: flex;
  flex: none;
  flex-wrap: wrap;
  align-items: center;
  column-gap: 12px;
  padding-left: 6px;
  border-bottom: 1px solid #fff;
}
.doc-icon { width: 16px; height: 16px; margin-right: -6px; }
.menu { height: 19px; white-space: nowrap; }
.menu span, .combo, .coords { font: 10px/16px "DejaVu Sans Mono", monospace; }
.mdi-controls { display: flex; gap: 2px; margin-left: auto; padding-right: 2px; }
.mdi-controls button {
  width: 17px;
  height: 17px;
  border: 1px solid #fff;
  border-right-color: #c9c5b4;
  border-bottom-color: #c9c5b4;
}
.mdi-controls svg { width: 15px; height: 15px; }

/* Horizontal toolbars */
.toolbar {
  display: flex;
  flex: none;
  align-items: center;
  height: 28px;
  overflow: hidden;
  border-bottom: 1px solid #c5c1b0;
  box-shadow: inset 0 1px #fff;
}
.grip {
  flex: none;
  width: 7px;
  height: 23px;
  margin: 0 3px;
  border: solid #fff;
  border-width: 0 2px;
  box-shadow: inset -1px 0 #b5b1a0, 1px 0 #b5b1a0;
}
.tool {
  display: flex;
  flex: none;
  align-items: center;
  justify-content: center;
  width: 23px;
  height: 22px;
}
.drop { width: 13px; }
.drop svg { width: 8px; height: 8px; }
.sep {
  flex: none;
  width: 6px;
  height: 22px;
  border-left: 2px solid transparent;
  background: linear-gradient(90deg, #c9c2aa 1px, #fff 1px, #fff 2px, transparent 2px);
  background-clip: padding-box;
  background-origin: padding-box;
}
.combo {
  display: flex;
  flex: none;
  align-items: center;
  height: 23px;
  padding: 1px;
  border: 1px solid #7f9db9;
  background: #fff;
}
.combo select { flex: 1; min-width: 0; padding-left: 4px; }
.grow { flex: 1; min-width: 0; padding-left: 2px; }
.wide { width: 130px; padding-left: 5px; }
.style-combo { width: 100px; }
.swatch {
  flex: none;
  width: 10px;
  height: 10px;
  border: 1px solid #222;
  background: #ff0;
}
.chevron {
  width: 15px;
  height: 19px;
  border: 1px solid #b3c7f5;
  border-radius: 2px;
  background: linear-gradient(#dce7fe, #b9cdf8);
  stroke: #4d6185;
  stroke-width: 2;
}
.subbar {
  display: flex;
  flex: none;
  align-items: center;
  width: 140px;
  overflow: hidden;
  border-left: 1px solid #c5c1b0;
}
.subbar .grip { margin: 0 4px 0 7px; }

/* Workspace */
.workspace {
  display: flex;
  flex: 1;
  min-height: 0;
  overflow: hidden;
}
.rail {
  display: flex;
  flex: none;
  flex-direction: column;
  align-items: center;
  width: 26px;
  padding-top: 3px;
  overflow: hidden;
  border-right: 1px solid #bbb7a6;
  box-shadow: inset 1px 0 #fff;
}
.draw-rail { width: 25px; }
.view-rail { width: 28px; }
.last-rail { border-right: 0; }
.hgrip {
  flex: none;
  width: 20px;
  height: 6px;
  margin-bottom: 2px;
  border: solid #fff;
  border-width: 2px 0;
  box-shadow: inset 0 -1px #b5b1a0, 0 1px #b5b1a0;
}
.hsep {
  flex: none;
  width: 20px;
  height: 6px;
  border-top: 2px solid transparent;
  background: linear-gradient(#c9c2aa 1px, #fff 1px, #fff 2px, transparent 2px) padding-box;
  background-origin: padding-box;
}
.gray svg { background: #cfcfcf; }
.rail-group {
  display: flex;
  flex: none;
  flex-direction: column;
  align-items: center;
  align-self: stretch;
  margin-top: 5px;
  padding-top: 4px;
  border-top: 1px solid #bbb7a6;
}

.drawing {
  display: flex;
  flex: 1;
  flex-direction: column;
  min-width: 0;
  padding: 1px 1px 3px 3px;
}
.viewports {
  display: grid;
  flex: 1;
  grid-template-rows: 131fr 130fr;
  grid-template-columns: 1fr 1fr;
  row-gap: 1px;
  min-height: 0;
  padding: 1px 0 1px 1px;
  border-top: 1px solid #777;
  background: #000;
}
.viewport {
  min-width: 0;
  min-height: 0;
  overflow: hidden;
  border: 1px solid #fff;
}
.viewport.active { border-width: 2px; }
.viewport svg { width: 100%; height: 100%; stroke: #fff; shape-rendering: crispEdges; }
.viewport .y { stroke: #ffff5c; }
.viewport .ucs { stroke: #777; }
.viewport text {
  fill: #fff;
  stroke: none;
  font: 7px "Liberation Sans", sans-serif;
}
.viewport .dim { fill: #777; }

.tabs { display: flex; flex: none; height: 15px; }
.nav {
  display: flex;
  align-items: center;
  justify-content: center;
  width: 18px;
  border-right: 1px solid #b5b1a0;
  border-bottom: 1px solid #b5b1a0;
}
.nav svg { width: 10px; height: 10px; }
.tab {
  height: 15px;
  padding: 0 7px;
  background:
    linear-gradient(75deg, #000 5px, transparent 5px),
    linear-gradient(-75deg, #000 5px, #f5f3e9 5px);
  border-bottom: 1px solid #000;
  clip-path: polygon(0 0, 100% 0, calc(100% - 4px) 100%, 4px 100%);
  line-height: 14px;
}
.tab.current {
  margin-left: 4px;
  background: #000;
  color: #fff;
}

/* Command window */
.command {
  display: flex;
  flex: none;
  margin-top: 4px;
  padding: 9px 8px 4px 0;
  border-top: 1px solid #333;
  box-shadow: 0 -5px 0 -4px #fff;
}
.command .grip { height: auto; margin: 0 4px 4px 5px; }
.console {
  flex: 1;
  min-width: 0;
  font-size: 16px;
  line-height: 16px;
}
.console span {
  padding-top: 3px;
  font: 13px/16px "Liberation Mono", monospace;
  white-space: pre;
}
.history {
  display: flex;
  height: 35px;
  border: 1px solid #333;
  border-width: 1px 0 1px 1px;
  border-bottom-color: #aaa;
  background: #fff;
}
.log { flex: 1; min-width: 0; overflow-x: clip; white-space: nowrap; }
.log p { display: flex; height: 16px; margin: 0; padding-left: 1px; align-items: center; }
.vscroll { display: flex; flex-direction: column; gap: 1px; padding: 1px 2px; }
.vscroll button, .hscroll button {
  width: 15px;
  height: 15px;
  border: 1px solid #b3c7f5;
  border-radius: 2px;
  background: #c8d7fb;
}
.vscroll svg, .hscroll svg { width: 13px; height: 13px; stroke: #44618e; stroke-width: 2; }
.prompt {
  display: flex;
  align-items: center;
  height: 18px;
  margin-right: 19px;
  border-left: 1px solid #333;
  background: #fff;
}
.prompt label { padding-left: 2px; }
.prompt input { flex: 1; min-width: 0; outline: 0; }
.hscroll { display: flex; gap: 2px; width: 64px; background: #f4f3ee; }
.hscroll .thumb svg { stroke: #86a3e8; stroke-width: 1; }
.hscroll .end { margin-left: auto; }

/* Status bar */
.status {
  display: flex;
  flex: none;
  gap: 2px;
  align-items: center;
  height: 22px;
  padding-left: 5px;
  border-top: 1px solid #aaa797;
  box-shadow: inset 0 1px #fff;
}
.coords {
  flex: 1;
  min-width: 0;
  height: 18px;
  overflow: hidden;
  padding-left: 2px;
  border: 1px solid #aaa797;
  border-right-color: #fff;
  border-bottom-color: #fff;
  white-space: nowrap;
}
.mode {
  flex: none;
  height: 18px;
  padding: 0 2px;
  border: 1px solid #fff;
  border-right-color: #aaa797;
  border-bottom-color: #aaa797;
  line-height: 16px;
  white-space: nowrap;
}
.mode.on { border-color: #444 #fff #fff #444; background: #f6f4ec; }
.mode.cut { width: 47px; overflow: hidden; border-right: 0; }
.tray { display: flex; flex: none; align-items: center; gap: 2px; }
.tray .resize { width: 14px; height: 14px; }

.watermark {
  position: absolute;
  bottom: 2px;
  left: 4px;
  color: #5b98f5;
  opacity: 0.7;
  pointer-events: none;
}
.watermark strong, .watermark span { display: block; }
.watermark strong { font-size: 30px; line-height: 24px; }
.watermark span { font: bold 17px/20px "Liberation Sans", sans-serif; }
```
